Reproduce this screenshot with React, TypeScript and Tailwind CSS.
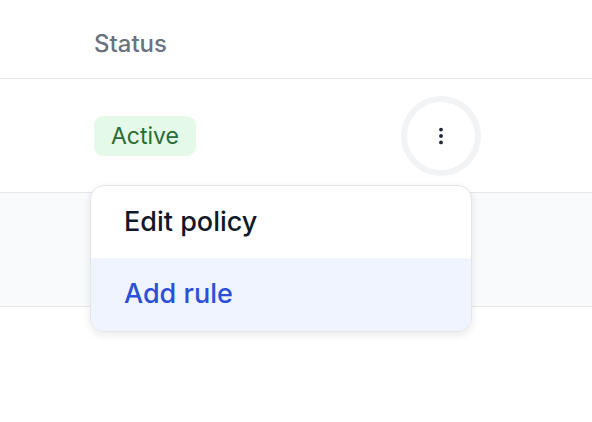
import { EllipsisVertical } from "lucide-react";

export default function App() {
  return (
    <div
      className="relative h-[422px] w-[592px] overflow-hidden bg-white"
      style={{ fontFamily: "Inter, 'Noto Sans', sans-serif" }}
    >
      <div className="h-[79px] border-b border-[#e5e7eb] pl-[94px] pt-[28px]">
        <span className="text-[24px] font-[450] leading-[32px] text-[#6b7280]">Status</span>
      </div>

      <div className="relative flex h-[114px] items-center border-b border-[#e5e7eb] pl-[94px]">
        <span className="rounded-[9px] bg-[#e4f9e8] px-[17px] py-[4px] text-[23px] leading-[32px] text-[#2a6b33]">
          Active
        </span>
        <button className="ml-auto mr-[117px] flex h-[68px] w-[68px] items-center justify-center rounded-full bg-white text-[#1f2937] ring-[6px] ring-[#f2f3f5]">
          <EllipsisVertical size={22} strokeWidth={2.2} />
        </button>

        <div className="absolute left-[90px] top-[106px] z-10 w-[382px] overflow-hidden rounded-[14px] border border-[#e3e5e9] bg-white shadow-[0_3px_8px_rgba(17,24,39,0.09)]">
          <div className="flex h-[72px] items-center px-[33px] text-[27px] font-medium text-[#111827]">
            Edit policy
          </div>
          <div className="flex h-[73px] items-center bg-[#eff4fe] px-[33px] text-[27px] font-medium text-[#2c4fd8]">
            Add rule
          </div>
        </div>
      </div>

      <div className="h-[114px] border-b border-[#e5e7eb] bg-[#f9fafb]" />
    </div>
  );
}
